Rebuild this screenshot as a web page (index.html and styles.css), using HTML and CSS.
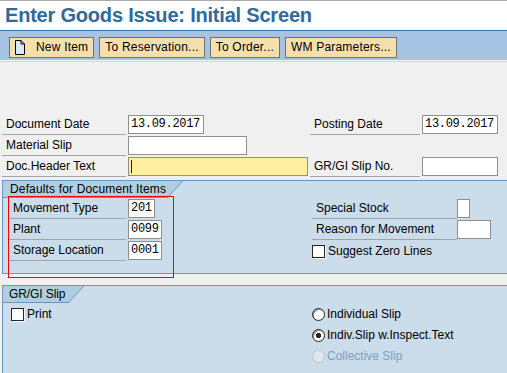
FILE: index.html
```html
<!DOCTYPE html>
<html>
<head>
<title>Enter Goods Issue: Initial Screen</title>
<link rel="stylesheet" href="styles.css">
</head>
<body>
<div class="Title">Enter Goods Issue: Initial Screen</div>

<div class="Toolbar">
   <span class="Btn BtnIcon">
      <svg class="DocIcon" width="10" height="15" viewBox="0 0 10 15">
         <path d="M0.5 0.5 H6 L9.5 4 V14.5 H0.5 Z" fill="#d9e9f8" stroke="#000" stroke-width="1"/>
         <path d="M6 0.5 V4 H9.5" fill="none" stroke="#000" stroke-width="1"/>
      </svg>
      New Item
   </span>
   <span class="Btn">To Reservation...</span>
   <span class="Btn">To Order...</span>
   <span class="Btn">WM Parameters...</span>
</div>

<div class="Main">
   <div class="Header">
      <div class="Lbl">Document Date</div>
      <div><span class="Inp W76">13.09.2017</span></div>
      <div class="Lbl">Posting Date</div>
      <div><span class="Inp W76">13.09.2017</span></div>

      <div class="Lbl">Material Slip</div>
      <div><span class="Inp W119"></span></div>
      <div></div>
      <div></div>

      <div class="Lbl">Doc.Header Text</div>
      <div><span class="Inp Req W180"><span class="Caret"></span></span></div>
      <div class="Lbl">GR/GI Slip No.</div>
      <div><span class="Inp W76"></span></div>
   </div>

   <div class="Group">
      <div class="Tab"><span class="TabText TabWide">Defaults for Document Items</span><span class="TabCut"></span></div>
      <div class="GroupBody Defaults">
         <div class="Lbl">Movement Type</div>
         <div><span class="Inp W27">201</span></div>
         <div class="Lbl LblR">Special Stock</div>
         <div><span class="Inp W13"></span></div>

         <div class="Lbl">Plant</div>
         <div><span class="Inp W34">0099</span></div>
         <div class="Lbl LblR">Reason for Movement</div>
         <div><span class="Inp W34"></span></div>

         <div class="Lbl">Storage Location</div>
         <div><span class="Inp W34">0001</span></div>
         <div class="Check Wide"><span class="Box"></span>Suggest Zero Lines</div>
      </div>
      <div class="Mark"></div>
   </div>

   <div class="Group Last">
      <div class="Tab"><span class="TabText TabNarrow">GR/GI Slip</span><span class="TabCut"></span></div>
      <div class="GroupBody Slip">
         <div class="Check"><span class="Box"></span>Print</div>
         <div class="Check"><span class="Radio"></span>Individual Slip</div>
         <div></div>
         <div class="Check"><span class="Radio On"></span>Indiv.Slip w.Inspect.Text</div>
         <div></div>
         <div class="Check Off"><span class="Radio"></span>Collective Slip</div>
      </div>
   </div>
</div>
</body>
</html>
```

FILE: styles.css
```css
*
{
   box-sizing: border-box;
}
HTML, BODY
{
   margin:   0;
   height:   373px;
   overflow: hidden;
}
BODY
{
   background:  #f0f0f0;
   font-family: "Liberation Sans", Arial, sans-serif;
   font-size:   12px;
   color:       #000;
}

/* title and button bar */
.Title
{
   height:         30px;
   border-top:     1px solid #a9a9a9;
   background:     #fff;
   padding-left:   5px;
   font-size:      20px;
   font-weight:    bold;
   letter-spacing: -0.2px;
   line-height:    29px;
   color:          #2f6a9b;
}
.Toolbar
{
   display:       flex;
   align-items:   flex-start;
   gap:           5px;
   height:        31px;
   padding:       6px 0 0 9px;
   border-top:    1px solid #3f73a7;
   border-bottom: 1px solid #eef4fa;
   box-shadow:    0 1px 0 #c9d9ea;
   background:    #a7c3e4;
}
.Btn
{
   display:        flex;
   align-items:    center;
   height:         21px;
   padding:        0 5px;
   border:         1px solid #6f6f6f;
   background:     #f4dfae;
   letter-spacing: 0.2px;
   line-height:    19px;
   white-space:    nowrap;
}
.DocIcon
{
   margin-right: 11px;
}

/* field rows */
.Main
{
   padding-top: 54px;
}
.Header
{
   display:               grid;
   grid-template-columns: 126px 182px 112px 76px;
   grid-auto-rows:        20px;
   row-gap:               1px;
   padding-left:          2px;
}
.Lbl
{
   margin-right:  2px;
   padding-left:  4px;
   border-bottom: 1px solid #a3a3a3;
   line-height:   19px;
   white-space:   nowrap;
}
.LblR
{
   margin-right: 0;
}
.Inp
{
   display:        block;
   height:         19px;
   padding-left:   2px;
   border:         1px solid #8f8f8f;
   background:     #fff;
   font-family:    "Liberation Mono", "Courier New", monospace;
   font-size:      12px;
   letter-spacing: -0.3px;
   line-height:    17px;
}
.Req  { background: #fff0a0; }
.W13  { width: 13px;  }
.W27  { width: 27px;  }
.W34  { width: 34px;  }
.W76  { width: 76px;  }
.W119 { width: 119px; }
.W180 { width: 180px; }
.Caret
{
   display:        inline-block;
   width:          1px;
   height:         13px;
   margin-top:     2px;
   background:     #1b1b5e;
   vertical-align: top;
}

/* group boxes */
.Group
{
   position:     relative;
   margin:       3px 0 0 2px;
   border:       1px solid #6e94bf;
   border-right: none;
   background:   #cbdcea;
}
.Last
{
   margin-top: 11px;
}
.Tab
{
   display: flex;
   height:  17px;
}
.TabText
{
   padding-left:   7px;
   border-bottom:  1px solid #6e94bf;
   background:     #aecfdf;
   letter-spacing: 0.15px;
   line-height:    16px;
   white-space:    nowrap;
}
.TabWide
{
   width: 164px;
}
.TabNarrow
{
   width:          65px;
   padding-left:   6px;
   letter-spacing: -0.1px;
}
.TabCut
{
   width:      16px;
   background: linear-gradient(to bottom right, #aecfdf calc(50% - 0.7px), #6e94bf 50%, #cbdcea calc(50% + 0.7px));
}
.GroupBody
{
   display:        grid;
   grid-auto-rows: 20px;
   row-gap:        1px;
}
.Defaults
{
   grid-template-columns: 119px 184px 145px 1fr;
   padding:               1px 0 12px 6px;
}
.Slip
{
   grid-template-columns: 301px 1fr;
   min-height:            80px;
   padding:               1px 0 0 8px;
}
.Check
{
   display:     flex;
   align-items: center;
   gap:         3px;
   white-space: nowrap;
}
.Wide
{
   grid-column: 3 / 5;
}
.Box
{
   width:      13px;
   height:     13px;
   border:     1px solid #262626;
   background: #fff;
   box-shadow: 1px 1px 0 #f4f8fb;
}
.Radio
{
   width:         13px;
   height:        13px;
   margin-right:  -1px;
   border:        1px solid #262626;
   border-radius: 50%;
   background:    #fff;
   box-shadow:    inset 1px 1px 0 #8c8c8c;
}
.On
{
   background: radial-gradient(circle, #262626 2.3px, #fff 3px);
}
.Off
{
   color: #7d9cc2;
}
.Off .Radio
{
   border-color: #b9c4cf;
   background:   #dfe6ed;
   box-shadow:   none;
}

/* red highlight drawn over the screen */
.Mark
{
   position: absolute;
   left:     5px;
   top:      15px;
   width:    166px;
   height:   82px;
   border:   1px solid #f00;
}
```
